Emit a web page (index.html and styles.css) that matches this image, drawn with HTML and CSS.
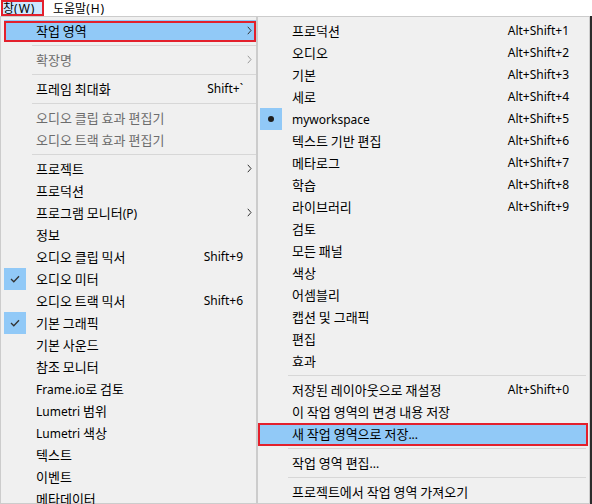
FILE: index.html
```html
<!DOCTYPE html>
<html>
<head>
    <title>창 메뉴</title>
    <link rel="stylesheet" href="styles.css">
</head>
<body>
    <div class="menubar">
        <span class="mb-item marked">창<span class="lat">(W)</span></span>
        <span class="mb-item">도움말<span class="lat">(H)</span></span>
    </div>

    <div class="workspace">
        <div class="menu menu-left">
            <div class="item hot marked-left"><span class="icon"></span><span class="label">작업 영역</span><span class="end"><svg width="5" height="9" viewBox="0 0 5 9"><path d="M0.8 0.8 L4 4.5 L0.8 8.2" fill="none" stroke="#333" stroke-width="1"/></svg></span></div>
            <div class="sep"></div>
            <div class="item disabled"><span class="icon"></span><span class="label">확장명</span><span class="end"><svg width="5" height="9" viewBox="0 0 5 9"><path d="M0.8 0.8 L4 4.5 L0.8 8.2" fill="none" stroke="#9a9a9a" stroke-width="1"/></svg></span></div>
            <div class="sep"></div>
            <div class="item"><span class="icon"></span><span class="label">프레임 최대화</span><span class="key">Shift+`</span><span class="end"></span></div>
            <div class="sep"></div>
            <div class="item disabled"><span class="icon"></span><span class="label">오디오 클립 효과 편집기</span><span class="end"></span></div>
            <div class="item disabled"><span class="icon"></span><span class="label">오디오 트랙 효과 편집기</span><span class="end"></span></div>
            <div class="sep"></div>
            <div class="item"><span class="icon"></span><span class="label">프로젝트</span><span class="end"><svg width="5" height="9" viewBox="0 0 5 9"><path d="M0.8 0.8 L4 4.5 L0.8 8.2" fill="none" stroke="#333" stroke-width="1"/></svg></span></div>
            <div class="item"><span class="icon"></span><span class="label">프로덕션</span><span class="end"></span></div>
            <div class="item"><span class="icon"></span><span class="label">프로그램 모니터<span class="lat">(P)</span></span><span class="end"><svg width="5" height="9" viewBox="0 0 5 9"><path d="M0.8 0.8 L4 4.5 L0.8 8.2" fill="none" stroke="#333" stroke-width="1"/></svg></span></div>
            <div class="item"><span class="icon"></span><span class="label">정보</span><span class="end"></span></div>
            <div class="item"><span class="icon"></span><span class="label">오디오 클립 믹서</span><span class="key">Shift+9</span><span class="end"></span></div>
            <div class="item"><span class="icon on"><svg width="10" height="8" viewBox="0 0 10 8"><path d="M1 4 L3.8 6.8 L9 1.2" fill="none" stroke="#333" stroke-width="1.3"/></svg></span><span class="label">오디오 미터</span><span class="end"></span></div>
            <div class="item"><span class="icon"></span><span class="label">오디오 트랙 믹서</span><span class="key">Shift+6</span><span class="end"></span></div>
            <div class="item"><span class="icon on"><svg width="10" height="8" viewBox="0 0 10 8"><path d="M1 4 L3.8 6.8 L9 1.2" fill="none" stroke="#333" stroke-width="1.3"/></svg></span><span class="label">기본 그래픽</span><span class="end"></span></div>
            <div class="item"><span class="icon"></span><span class="label">기본 사운드</span><span class="end"></span></div>
            <div class="item"><span class="icon"></span><span class="label">참조 모니터</span><span class="end"></span></div>
            <div class="item"><span class="icon"></span><span class="label"><span class="lat">Frame.io</span>로 검토</span><span class="end"></span></div>
            <div class="item"><span class="icon"></span><span class="label"><span class="lat">Lumetri</span> 범위</span><span class="end"></span></div>
            <div class="item"><span class="icon"></span><span class="label"><span class="lat">Lumetri</span> 색상</span><span class="end"></span></div>
            <div class="item"><span class="icon"></span><span class="label">텍스트</span><span class="end"></span></div>
            <div class="item"><span class="icon"></span><span class="label">이벤트</span><span class="end"></span></div>
            <div class="item"><span class="icon"></span><span class="label">메타데이터</span><span class="end"></span></div>
        </div>

        <div class="menu menu-right">
            <div class="item"><span class="icon"></span><span class="label">프로덕션</span><span class="key">Alt+Shift+1</span><span class="end"></span></div>
            <div class="item"><span class="icon"></span><span class="label">오디오</span><span class="key">Alt+Shift+2</span><span class="end"></span></div>
            <div class="item"><span class="icon"></span><span class="label">기본</span><span class="key">Alt+Shift+3</span><span class="end"></span></div>
            <div class="item"><span class="icon"></span><span class="label">세로</span><span class="key">Alt+Shift+4</span><span class="end"></span></div>
            <div class="item"><span class="icon on"><span class="dot"></span></span><span class="label"><span class="lat">myworkspace</span></span><span class="key">Alt+Shift+5</span><span class="end"></span></div>
            <div class="item"><span class="icon"></span><span class="label">텍스트 기반 편집</span><span class="key">Alt+Shift+6</span><span class="end"></span></div>
            <div class="item"><span class="icon"></span><span class="label">메타로그</span><span class="key">Alt+Shift+7</span><span class="end"></span></div>
            <div class="item"><span class="icon"></span><span class="label">학습</span><span class="key">Alt+Shift+8</span><span class="end"></span></div>
            <div class="item"><span class="icon"></span><span class="label">라이브러리</span><span class="key">Alt+Shift+9</span><span class="end"></span></div>
            <div class="item"><span class="icon"></span><span class="label">검토</span><span class="end"></span></div>
            <div class="item"><span class="icon"></span><span class="label">모든 패널</span><span class="end"></span></div>
            <div class="item"><span class="icon"></span><span class="label">색상</span><span class="end"></span></div>
            <div class="item"><span class="icon"></span><span class="label">어셈블리</span><span class="end"></span></div>
            <div class="item"><span class="icon"></span><span class="label">캡션 및 그래픽</span><span class="end"></span></div>
            <div class="item"><span class="icon"></span><span class="label">편집</span><span class="end"></span></div>
            <div class="item"><span class="icon"></span><span class="label">효과</span><span class="end"></span></div>
            <div class="sep"></div>
            <div class="item"><span class="icon"></span><span class="label">저장된 레이아웃으로 재설정</span><span class="key">Alt+Shift+0</span><span class="end"></span></div>
            <div class="item"><span class="icon"></span><span class="label">이 작업 영역의 변경 내용 저장</span><span class="end"></span></div>
            <div class="item hot marked-right"><span class="icon"></span><span class="label">새 작업 영역으로 저장<span class="lat">...</span></span><span class="end"></span></div>
            <div class="sep"></div>
            <div class="item"><span class="icon"></span><span class="label">작업 영역 편집<span class="lat">...</span></span><span class="end"></span></div>
            <div class="sep"></div>
            <div class="item"><span class="icon"></span><span class="label">프로젝트에서 작업 영역 가져오기</span><span class="end"></span></div>
        </div>

        <div class="backdrop"></div>
    </div>
</body>
</html>
```

FILE: styles.css
```css
body {
    margin: 0;
    width: 592px;
    height: 504px;
    overflow: hidden;
    background: #fff;
    font-family: "Noto Sans CJK KR", sans-serif;
    font-size: 13px;
    color: #000;
}
.lat,
.key {
    font-family: "Noto Sans", "Noto Sans CJK KR", sans-serif;
    font-size: 12px;
}
.menubar {
    height: 16px;
    display: flex;
    gap: 9px;
    background: #fff;
}
.mb-item {
    height: 16px;
    line-height: 16px;
    font-size: 12px;
    white-space: nowrap;
    position: relative;
}
.mb-item .lat {
    letter-spacing: 1px;
}
.mb-item.marked {
    margin-left: 1px;
    width: 43px;
    box-sizing: border-box;
    padding-left: 2px;
    background: #cce8ff;
}
.mb-item.marked::after {
    content: "";
    position: absolute;
    top: 0;
    left: 0;
    right: 0;
    bottom: 0;
    border: 2px solid #e3202c;
}
.workspace {
    display: flex;
    height: 488px;
}
.menu {
    background: #f0f0f0;
    border: 1px solid #cccccc;
    box-sizing: border-box;
    padding-top: 3px;
    flex: none;
}
.menu-left {
    width: 257px;
    padding-left: 3px;
}
.menu-right {
    width: 333px;
    padding-left: 2px;
    padding-right: 3px;
}
.backdrop {
    flex: 1;
    background: #2b2b2b;
}
.item {
    height: 22px;
    box-sizing: border-box;
    padding-bottom: 1px;
    display: flex;
    align-items: center;
    position: relative;
    white-space: nowrap;
}
.item.hot {
    background: #91c9f7;
}
.item.disabled {
    color: #6d6d6d;
}
.marked-left::after,
.marked-right::after {
    content: "";
    position: absolute;
    border: 2px solid #e3202c;
}
.marked-left::after {
    top: 1px;
    bottom: 0;
    left: 0;
    right: 0;
}
.marked-right::after {
    top: 0;
    bottom: -1px;
    left: -2px;
    right: -2px;
}
.icon {
    width: 22px;
    height: 22px;
    margin-bottom: -1px;
    flex: none;
    display: flex;
    align-items: center;
    justify-content: center;
}
.icon.on {
    background: #91c9f7;
}
.dot {
    width: 6px;
    height: 6px;
    border-radius: 50%;
    background: #1e1e1e;
}
.label {
    flex: 1;
    padding-left: 10px;
}
.end {
    width: 13px;
    flex: none;
    display: flex;
    align-items: center;
    padding-left: 4px;
    box-sizing: border-box;
}
.menu-right .end {
    width: 17px;
}
.sep {
    height: 1px;
    background: #d7d7d7;
    margin: 3px 0 3px 28px;
}
```
